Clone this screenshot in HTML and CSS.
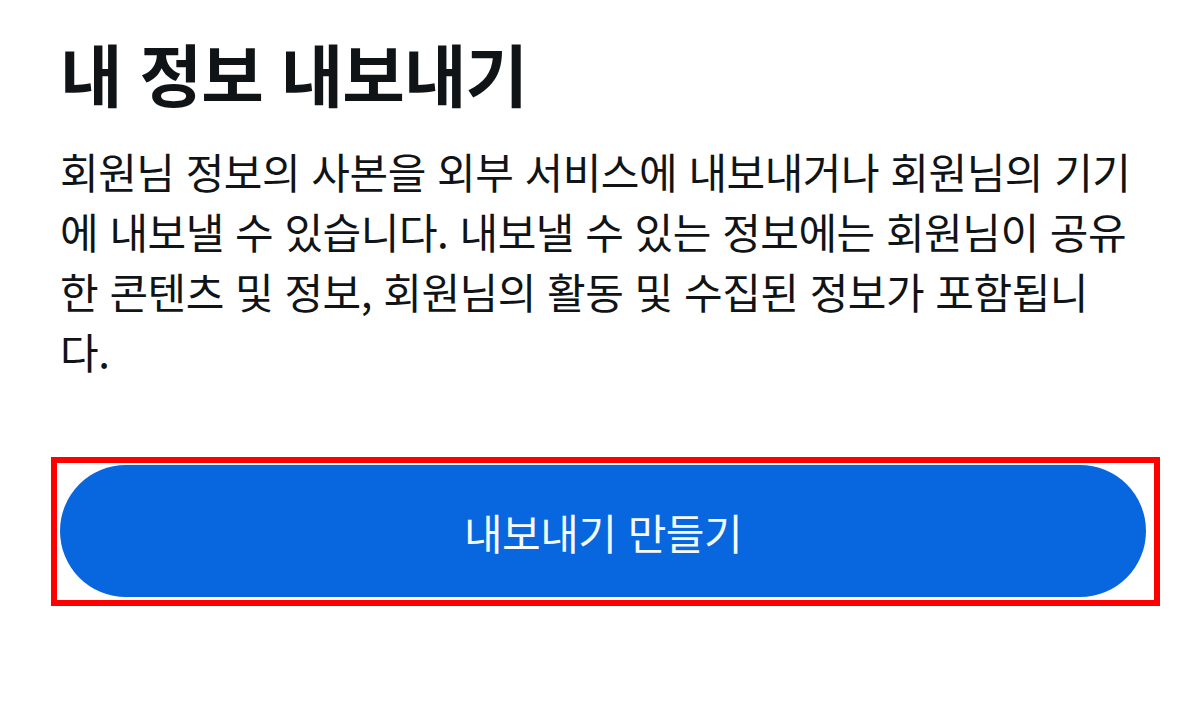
FILE: index.html
```html
<!DOCTYPE html>
<html lang="ko">
<head>
<meta charset="utf-8">
<link rel="stylesheet" href="styles.css">
</head>
<body>
<main class="page">
  <h1 class="title">내 정보 내보내기</h1>
  <p class="desc">회원님 정보의 사본을 외부 서비스에 내보내거나 회원님의 기기에 내보낼 수 있습니다. 내보낼 수 있는 정보에는 회원님이 공유한 콘텐츠 및 정보, 회원님의 활동 및 수집된 정보가 포함됩니<br>다.</p>
  <div class="highlight">
    <button class="cta">내보내기 만들기</button>
  </div>
</main>
</body>
</html>
```
FILE: styles.css
```css
html, body {
  margin: 0;
  padding: 0;
  background: #ffffff;
}
.page {
  font-family: "Noto Sans CJK KR", "Noto Sans", sans-serif;
  padding: 33px 0 0 60px;
  width: 1090px;
}
.title {
  margin: 0;
  font-size: 68px;
  font-weight: 700;
  line-height: 80px;
  color: #111416;
  letter-spacing: -1px;
}
.desc {
  margin: 28px 0 0 0;
  font-size: 42px;
  line-height: 60px;
  color: #111416;
  letter-spacing: -0.5px;
}
.highlight {
  margin: 76px 0 0 -9px;
  width: 1086px;
  border: 6px solid #ff0000;
  padding: 2px 8px 3px 3px;
}
.cta {
  display: block;
  width: 1086px;
  height: 132px;
  border: none;
  border-radius: 66px;
  background: #0866df;
  color: #f4f8ff;
  font-family: "Noto Sans CJK KR", "Noto Sans", sans-serif;
  font-size: 42px;
  letter-spacing: -0.5px;
  padding: 0;
}
```
